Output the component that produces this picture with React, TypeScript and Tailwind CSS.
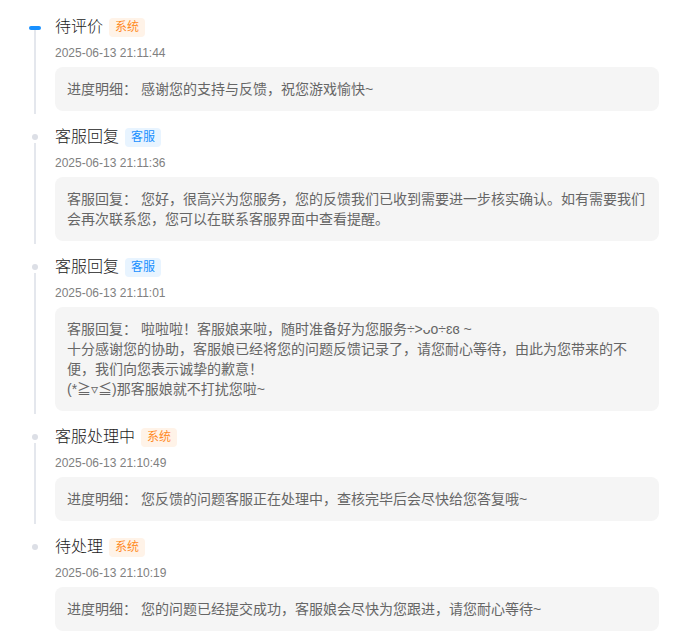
import React from "react";

type Item = {
  title: string;
  tag: "系统" | "客服";
  time: string;
  label: string;
  lines: string[];
};

const items: Item[] = [
  {
    title: "待评价",
    tag: "系统",
    time: "2025-06-13 21:11:44",
    label: "进度明细：",
    lines: ["感谢您的支持与反馈，祝您游戏愉快~"],
  },
  {
    title: "客服回复",
    tag: "客服",
    time: "2025-06-13 21:11:36",
    label: "客服回复：",
    lines: [
      "您好，很高兴为您服务，您的反馈我们已收到需要进一步核实确认。如有需要我们会再次联系您，您可以在联系客服界面中查看提醒。",
    ],
  },
  {
    title: "客服回复",
    tag: "客服",
    time: "2025-06-13 21:11:01",
    label: "客服回复：",
    lines: [
      "啦啦啦！客服娘来啦，随时准备好为您服务÷>ᴗo÷ɛɞ ~",
      "十分感谢您的协助，客服娘已经将您的问题反馈记录了，请您耐心等待，由此为您带来的不便，我们向您表示诚挚的歉意！",
      "(*≧▿≦)那客服娘就不打扰您啦~",
    ],
  },
  {
    title: "客服处理中",
    tag: "系统",
    time: "2025-06-13 21:10:49",
    label: "进度明细：",
    lines: ["您反馈的问题客服正在处理中，查核完毕后会尽快给您答复哦~"],
  },
  {
    title: "待处理",
    tag: "系统",
    time: "2025-06-13 21:10:19",
    label: "进度明细：",
    lines: ["您的问题已经提交成功，客服娘会尽快为您跟进，请您耐心等待~"],
  },
];

const font = {
  fontFamily:
    '"Liberation Sans", "Noto Sans CJK SC", "Noto Sans", sans-serif',
};

export default function App() {
  return (
    <div className="w-[698px] min-h-[642px] bg-white pt-[17px] pl-[29px] pr-[39px]" style={font}>
      {items.map((it, i) => {
        const first = i === 0;
        const last = i === items.length - 1;
        return (
          <div key={i} className={`flex ${last ? "" : "pb-4"}`}>
            <div className="flex w-[12px] shrink-0 flex-col items-center">
              {first ? (
                <div className="mt-[9px] h-[4px] w-[12px] rounded-full bg-[#1890ff]" />
              ) : (
                <div className="mt-[7px] h-[6px] w-[6px] rounded-full bg-[#dcdfe6]" />
              )}
              {!last && (
                <div
                  className={`w-[2px] flex-1 bg-[#e4e7ed] mb-[-3px] ${first ? "mt-0" : "mt-[3px]"}`}
                />
              )}
            </div>
            <div className="ml-[14px] flex-1 min-w-0">
              <div className="flex h-[20px] items-center">
                <span className="text-[16px] font-light leading-[20px] text-[#1a1a1a]">{it.title}</span>
                <span
                  className={`ml-[6px] flex h-[19px] items-center rounded-[4px] px-[6px] text-[12px] leading-none ${
                    it.tag === "系统"
                      ? "bg-[#fff3e8] text-[#ff8a1f]"
                      : "bg-[#e8f4ff] text-[#1890ff]"
                  }`}
                >
                  {it.tag}
                </span>
              </div>
              <div className="mt-[8px] text-[12px] leading-[16px] text-[#808080]">{it.time}</div>
              <div className="mt-[6px] rounded-[8px] bg-[#f5f5f5] py-[12px] pl-[12px] pr-[14px] text-[14px] leading-[20px] text-[#666666]">
                {it.lines.map((l, j) => (
                  <div key={j}>{j === 0 ? `${it.label} ${l}` : l}</div>
                ))}
              </div>
            </div>
          </div>
        );
      })}
    </div>
  );
}
